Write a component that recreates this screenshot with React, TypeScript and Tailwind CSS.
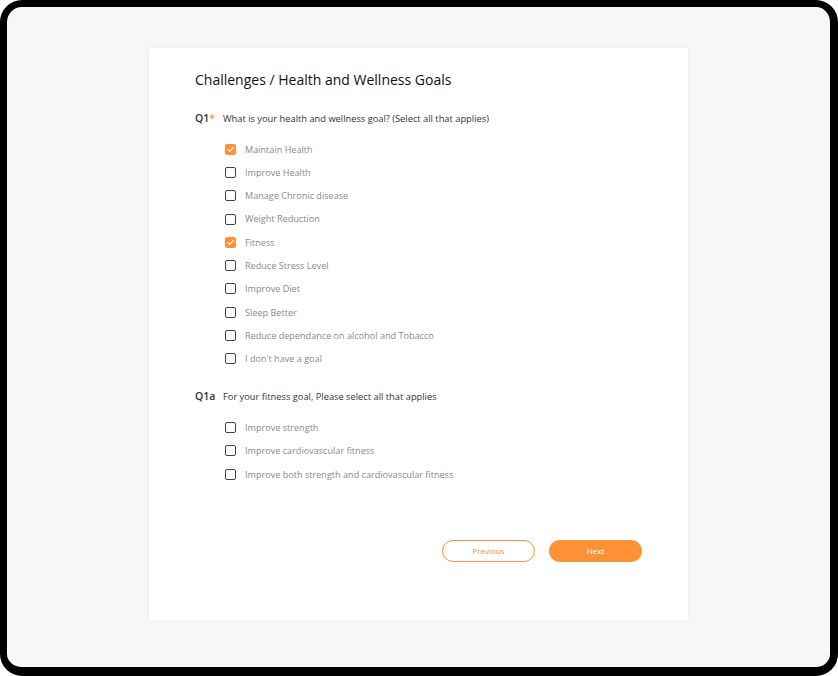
import React from 'react';

const goals = [
    { label: 'Maintain Health', checked: true },
    { label: 'Improve Health', checked: false },
    { label: 'Manage Chronic disease', checked: false },
    { label: 'Weight Reduction', checked: false },
    { label: 'Fitness', checked: true },
    { label: 'Reduce Stress Level', checked: false },
    { label: 'Improve Diet', checked: false },
    { label: 'Sleep Better', checked: false },
    { label: 'Reduce dependance on alcohol and Tobacco', checked: false },
    { label: "I don't have a goal", checked: false },
];

const fitness = [
    { label: 'Improve strength', checked: false },
    { label: 'Improve cardiovascular fitness', checked: false },
    { label: 'Improve both strength and cardiovascular fitness', checked: false },
];

const Check: React.FC<{ label: string; checked: boolean }> = ({ label, checked }) => (
    <div className="flex items-center h-[23.3px]">
        {checked ? (
            <span className="w-[11px] h-[11px] rounded-[2px] bg-[#ff9236] flex items-center justify-center">
                <svg viewBox="0 0 12 12" className="w-[9px] h-[9px]" fill="none" stroke="white" strokeWidth="1.6" strokeLinecap="round" strokeLinejoin="round">
                    <path d="M2.5 6.2 5 8.5 9.5 3.5" />
                </svg>
            </span>
        ) : (
            <span className="w-[11px] h-[11px] rounded-[2px] border-[1.5px] border-[#444]" />
        )}
        <span className="ml-[9px] text-[9.1px] text-[#8a8a8a] leading-none">{label}</span>
    </div>
);

export default function App() {
    return (
        <div className="w-[838px] h-[676px] bg-white" style={{ fontFamily: '"Open Sans", "Noto Sans", sans-serif' }}>
            <div className="w-full h-full rounded-[22px] border-l-[7px] border-t-[7px] border-r-[8px] border-b-[9px] border-black bg-[#f7f7f7] pt-[41px]">
                <div className="mx-auto w-[539px] h-[572px] bg-white shadow-[0_0_4px_rgba(0,0,0,0.06)] pl-[46px] pt-[65px] relative">
                    <h1 className="absolute left-[46px] top-[21px] text-[14px] text-[#111]">
                        Challenges / Health and Wellness Goals
                    </h1>
                    <div className="flex items-center text-[9.3px] text-[#333] leading-none">
                        <span className="w-[28px] font-semibold text-[10.5px]">
                            Q1<span className="text-[#ff9236]">*</span>
                        </span>
                        <span>What is your health and wellness goal? (Select all that applies)</span>
                    </div>
                    <div className="pl-[30px] mt-[14px]">
                        {goals.map((g) => (
                            <Check key={g.label} {...g} />
                        ))}
                    </div>
                    <div className="flex items-center text-[9.3px] text-[#333] leading-none mt-[21px]">
                        <span className="w-[28px] font-semibold text-[10.5px]">Q1a</span>
                        <span>For your fitness goal, Please select all that applies</span>
                    </div>
                    <div className="pl-[30px] mt-[14px]">
                        {fitness.map((g) => (
                            <Check key={g.label} {...g} />
                        ))}
                    </div>
                    <div className="flex gap-[14px] ml-[247px] mt-[54px]">
                        <button className="w-[93px] h-[22px] rounded-full border border-[#ff9236] text-[#ff9236] text-[8px] bg-white">
                            Previous
                        </button>
                        <button className="w-[93px] h-[22px] rounded-full bg-[#ff9236] text-white text-[8px]">
                            Next
                        </button>
                    </div>
                </div>
            </div>
        </div>
    );
}
